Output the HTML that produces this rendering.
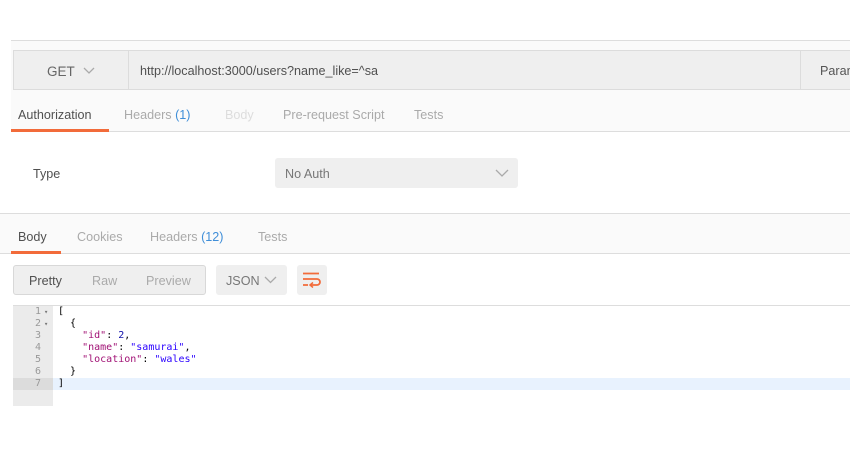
<!DOCTYPE html>
<html><head><style>
*{margin:0;padding:0;box-sizing:border-box}
body{width:850px;height:450px;background:#fff;font-family:"Liberation Sans",sans-serif;position:relative;overflow:hidden;font-size:12.6px;color:#808080}
.a{position:absolute}
.mono{font-family:"DejaVu Sans Mono","Liberation Mono",monospace;font-size:10px;line-height:12px}
</style></head><body>
<div class="a" style="left:11px;top:40px;width:839px;height:92px;background:#fafafa;border-top:1px solid #ddd"></div>
<div class="a" style="left:13px;top:50px;width:840px;height:40px;background:#efefef;border:1px solid #dcdcdc"></div>
<div class="a" style="left:128px;top:51px;width:1px;height:38px;background:#dcdcdc"></div>
<div class="a" style="left:800px;top:51px;width:1px;height:38px;background:#dcdcdc"></div>
<div class="a" style="left:47px;top:64px;font-size:13.5px;color:#666">GET</div>
<svg class="a" style="left:83px;top:67px" width="12" height="8"><path d="M1 1l5 5 5-5" stroke="#aaa" stroke-width="1.3" fill="none"/></svg>
<div class="a" style="left:140px;top:64px;font-size:12.6px;color:#505050">http://localhost:3000/users?name_like=^sa</div>
<div class="a" style="left:820px;top:64px;font-size:12.6px;color:#555">Params</div>
<div class="a" style="left:18px;top:108px;color:#505050">Authorization</div>
<div class="a" style="left:124px;top:108px;color:#aaa">Headers <span style="color:#3f8ed8">(1)</span></div>
<div class="a" style="left:225px;top:108px;color:#ddd">Body</div>
<div class="a" style="left:283px;top:108px;color:#aaa">Pre-request Script</div>
<div class="a" style="left:414px;top:108px;color:#aaa">Tests</div>
<div class="a" style="left:11px;top:131px;width:839px;height:1px;background:#ddd"></div>
<div class="a" style="left:11px;top:129px;width:98px;height:3px;background:#f26b3a"></div>
<div class="a" style="left:33px;top:167px;color:#505050">Type</div>
<div class="a" style="left:275px;top:158px;width:243px;height:30px;background:#efefef;border-radius:3px"></div>
<div class="a" style="left:285px;top:167px;color:#777">No Auth</div>
<svg class="a" style="left:495px;top:169px" width="14" height="9"><path d="M1 1l6 6 6-6" stroke="#aaa" stroke-width="1.3" fill="none"/></svg>
<div class="a" style="left:0;top:213px;width:850px;height:41px;background:#fafafa;border-top:1px solid #ddd;border-bottom:1px solid #ddd"></div>
<div class="a" style="left:18px;top:230px;color:#505050">Body</div>
<div class="a" style="left:77px;top:230px;color:#aaa">Cookies</div>
<div class="a" style="left:150px;top:230px;color:#aaa">Headers <span style="color:#3f8ed8">(12)</span></div>
<div class="a" style="left:258px;top:230px;color:#aaa">Tests</div>
<div class="a" style="left:11px;top:251px;width:50px;height:3px;background:#f26b3a"></div>
<div class="a" style="left:13px;top:265px;width:193px;height:30px;background:#efefef;border:1px solid #d8d8d8;border-radius:3px"></div>
<div class="a" style="left:29px;top:274px;color:#505050">Pretty</div>
<div class="a" style="left:92px;top:274px;color:#aaa">Raw</div>
<div class="a" style="left:146px;top:274px;color:#aaa">Preview</div>
<div class="a" style="left:216px;top:265px;width:71px;height:30px;background:#efefef;border-radius:3px"></div>
<div class="a" style="left:226px;top:274px;color:#777">JSON</div>
<svg class="a" style="left:264px;top:276px" width="13" height="8"><path d="M1 1l5.5 5.5 5.5-5.5" stroke="#aaa" stroke-width="1.3" fill="none"/></svg>
<div class="a" style="left:297px;top:265px;width:30px;height:30px;background:#efefef;border-radius:3px"></div>
<svg class="a" style="left:303px;top:272px" width="18" height="16"><path d="M0 1.5h16M0 7h14a3 3 0 0 1 0 6h-6M0 13h5" stroke="#f26b3a" stroke-width="1.8" fill="none"/><path d="M10 10.5l-3 2.5 3 2.5" stroke="#f26b3a" stroke-width="1.5" fill="none"/></svg>
<div class="a" style="left:13px;top:305px;width:837px;height:1px;background:#ddd"></div>
<div class="a" style="left:13px;top:306px;width:40px;height:100px;background:#ebebeb"></div>
<div class="a" style="left:13px;top:378px;width:40px;height:12px;background:#dcdcdc"></div>
<div class="a" style="left:53px;top:378px;width:797px;height:12px;background:#e8f2fe"></div>
<div class="a mono" style="left:13px;top:306px;width:28px;text-align:right;color:#999">1<br>2<br>3<br>4<br>5<br>6<br>7</div>
<div class="a mono" style="left:44px;top:306px;color:#777;font-size:7px">▾<br>▾</div>
<div class="a mono" style="left:58px;top:306px;color:#000;white-space:pre">[
  {
    <span style="color:#a11175">"id"</span>: <span style="color:#11a">2</span>,
    <span style="color:#a11175">"name"</span>: <span style="color:#2a00ff">"samurai"</span>,
    <span style="color:#a11175">"location"</span>: <span style="color:#2a00ff">"wales"</span>
  }
]</div>
</body></html>
